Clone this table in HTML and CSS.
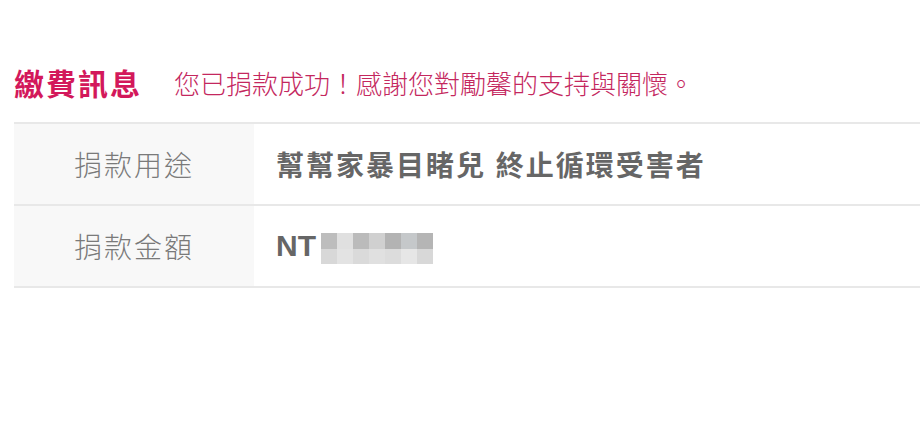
FILE: index.html
```html
<!DOCTYPE html>
<html lang="zh-Hant">
<head>
  <meta charset="UTF-8">
  <title>繳費訊息</title>
  <link rel="stylesheet" href="styles.css">
</head>
<body>

  <!-- 標題列 -->
  <div class="pay-head">
    <h2 class="pay-title">繳費訊息</h2>
    <p class="pay-note">您已捐款成功！感謝您對勵馨的支持與關懷。</p>
  </div>

  <!-- 捐款資訊表 -->
  <div class="pay-table">
    <div class="pay-row">
      <div class="pay-label">捐款用途</div>
      <div class="pay-value">幫幫家暴目睹兒 終止循環受害者</div>
    </div>
    <div class="pay-row">
      <div class="pay-label">捐款金額</div>
      <div class="pay-value">
        <span class="currency">NT</span>
        <span class="masked">
          <i class="m1"></i><i class="m2"></i><i class="m3"></i><i class="m4"></i><i class="m5"></i><i class="m6"></i><i class="m7"></i>
          <i class="b1"></i><i class="b2"></i><i class="b3"></i><i class="b4"></i><i class="b5"></i><i class="b6"></i><i class="b7"></i>
        </span>
      </div>
    </div>
  </div>

</body>
</html>
```

FILE: styles.css
```css
/* 頁面整體 */
body {
  margin: 0;
  background: #fff;
  font-family: "Liberation Sans", "Noto Sans CJK TC", sans-serif;
}

/* 標題列 */
.pay-head {
  display: flex;
  align-items: center;
  padding: 64px 0 0 14px;
  height: 42px;
  margin-bottom: 16px;
}

.pay-title {
  margin: 0;
  font-size: 30px;
  line-height: 42px;
  font-weight: 700;
  letter-spacing: 2px;
  color: #d3185b;
}

.pay-note {
  margin: 0 0 0 32px;
  font-size: 26px;
  line-height: 42px;
  font-weight: 300;
  color: #c4275e;
}

/* 表格 */
.pay-table {
  margin-left: 14px;
  border-top: 2px solid #e8e8e8;
}

.pay-row {
  display: grid;
  grid-template-columns: 240px 1fr;
  height: 80px;
  border-bottom: 2px solid #e8e8e8;
}

.pay-label {
  display: flex;
  align-items: center;
  justify-content: center;
  background: #f8f8f8;
  font-size: 28px;
  font-weight: 300;
  letter-spacing: 2px;
  color: #7a7a7a;
}

.pay-value {
  display: flex;
  align-items: center;
  padding-left: 22px;
  font-size: 28px;
  font-weight: 700;
  letter-spacing: 2px;
  color: #666;
}

.currency {
  font-size: 30px;
  letter-spacing: 0;
}

/* 馬賽克金額 */
.masked {
  display: grid;
  grid-template-columns: repeat(7, 16px);
  grid-template-rows: 16px 15px;
  margin-left: 5px;
  margin-top: 4px;
}

.masked i { display: block; }
.m1 { background: #bdbdbd; }
.m2 { background: #e0e0e0; }
.m3 { background: #bbbbbb; }
.m4 { background: #d0d0d0; }
.m5 { background: #b3b3b3; }
.m6 { background: #c5c8ca; }
.m7 { background: #b5b5b5; }
.b1 { background: #d8d8d8; }
.b2 { background: #e3e3e3; }
.b3 { background: #dadada; }
.b4 { background: #e0e0e0; }
.b5 { background: #dcdcdc; }
.b6 { background: #e6e6e6; }
.b7 { background: #d8d8d8; }
```
